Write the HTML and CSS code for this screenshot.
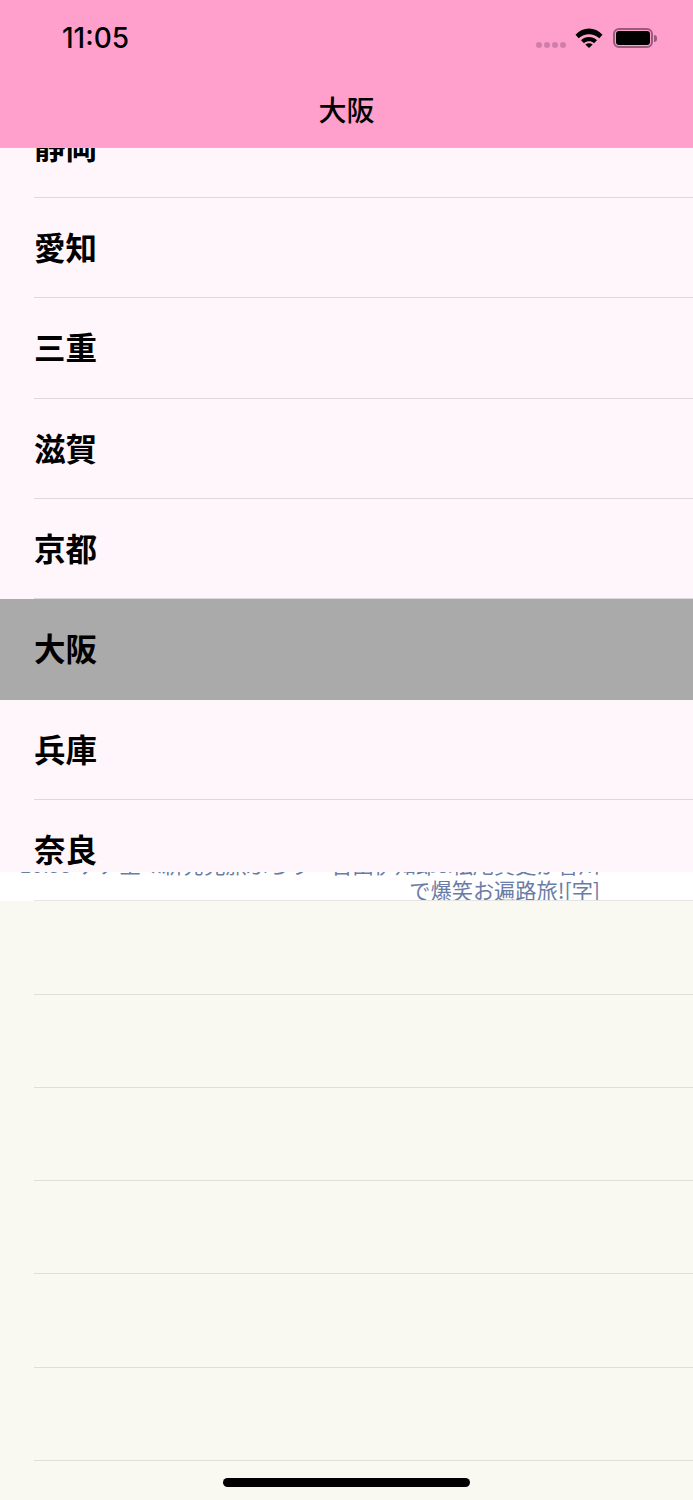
FILE: index.html
```html
<!DOCTYPE html>
<html lang="ja">
<head>
<meta charset="utf-8">
<title>大阪</title>
<link rel="stylesheet" href="styles.css">
</head>
<body>
<div class="screen">
  <header class="nav">
    <div class="status">
      <span class="time">11:05</span>
      <div class="indicators">
        <div class="signal"><i></i><i></i><i></i><i></i></div>
        <svg class="wifi" width="28" height="20" viewBox="0 0 28 20"><path d="M0.500 6.800C8 -1.600 20 -1.600 27.500 6.800L24.300 10.200C18.300 4.800 9.700 4.800 3.700 10.200Z" fill="#000"/><path d="M6 12.200C10.500 7.900 17.500 7.900 22 12.200L19 15.200C16 12.600 12 12.600 9 15.200Z" fill="#000"/><path d="M10.300 16.400C12.500 14.800 15.500 14.800 17.700 16.400L14 20Z" fill="#000"/></svg>
        <div class="battery"><div class="battery-body"><div class="battery-fill"></div></div><div class="battery-cap"></div></div>
      </div>
    </div>
    <h1 class="title">大阪</h1>
  </header>
  <div class="list">
    <div class="rows">
      <div class="row">静岡</div>
      <div class="row">愛知</div>
      <div class="row">三重</div>
      <div class="row">滋賀</div>
      <div class="row">京都</div>
      <div class="row selected">大阪</div>
      <div class="row">兵庫</div>
      <div class="row">奈良</div>
    </div>
  </div>
  <div class="program">
    <p class="program-text">10:55 ケア王≪新発見旅ぶらり一吉田伊知郎&amp;松尾貴史が香川<br>で爆笑お遍路旅![字]</p>
  </div>
  <div class="empty">
    <div class="empty-row"></div>
    <div class="empty-row"></div>
    <div class="empty-row"></div>
    <div class="empty-row"></div>
    <div class="empty-row"></div>
    <div class="empty-row"></div>
  </div>
  <div class="home-bar"></div>
</div>
</body>
</html>
```
FILE: styles.css
```css
* { box-sizing: border-box; }
html, body { margin: 0; padding: 0; }
body { font-family: "Noto Sans CJK JP", "Liberation Sans", sans-serif; background: #f9f9f1; }
.screen { position: relative; width: 693px; height: 1500px; overflow: hidden; display: flex; flex-direction: column; background: #f9f9f1; }
.nav { height: 148px; flex: none; background: #ffa0cc; border-bottom: 1px solid #e6b4cc; display: flex; flex-direction: column; }
.status { height: 76px; flex: none; display: flex; justify-content: space-between; padding: 0 36px 0 62px; }
.time { font-family: Inter, "Liberation Sans", sans-serif; font-size: 28px; font-weight: 500; line-height: 76px; color: #000; }
.indicators { display: flex; align-items: flex-start; padding-top: 28px; }
.signal { display: flex; gap: 2px; margin-top: 14px; margin-right: 9px; }
.signal i { width: 6px; height: 6px; border-radius: 50%; background: #cf80aa; }
.wifi { margin-right: 10px; }
.battery { display: flex; align-items: center; }
.battery-body { width: 40px; height: 20px; border: 2px solid #9a5a7c; border-radius: 6px; padding: 1px; }
.battery-fill { width: 100%; height: 100%; background: #000; border-radius: 3px; }
.battery-cap { width: 3px; height: 7px; background: #9a5a7c; border-radius: 0 3px 3px 0; margin-left: 1px; }
.title { margin: 0; font-size: 28px; font-weight: 500; line-height: 67px; text-align: center; color: #000; }
.list { height: 724px; flex: none; overflow: hidden; background: #fff6fb; }
.rows { margin-top: -50.6px; }
.row { height: 100.4px; padding-left: 34px; font-size: 31.5px; font-weight: 700; line-height: 96px; color: #000; position: relative; }
.row::after { content: ""; position: absolute; left: 34px; right: 0; bottom: 0; height: 1px; background: #dcd8dc; }
.selected { background: #aaaaaa; }
.selected::after { display: none; }
.program { height: 29px; flex: none; overflow: hidden; background: #fff; position: relative; }
.program::after { content: ""; position: absolute; left: 34px; right: 0; bottom: 0; height: 1px; background: #e4e4e4; }
.program-text { margin: -21px 0 0; width: 600px; font-size: 21.200px; line-height: 25.500px; text-align: right; color: #6a7ca6; white-space: nowrap; }
.empty { flex: 1; padding-top: 0.600px; }
.empty-row { height: 93.200px; margin-left: 34px; border-bottom: 1px solid #dededa; }
.home-bar { position: absolute; left: 223px; bottom: 13px; width: 247px; height: 9px; border-radius: 5px; background: #000; }
```
